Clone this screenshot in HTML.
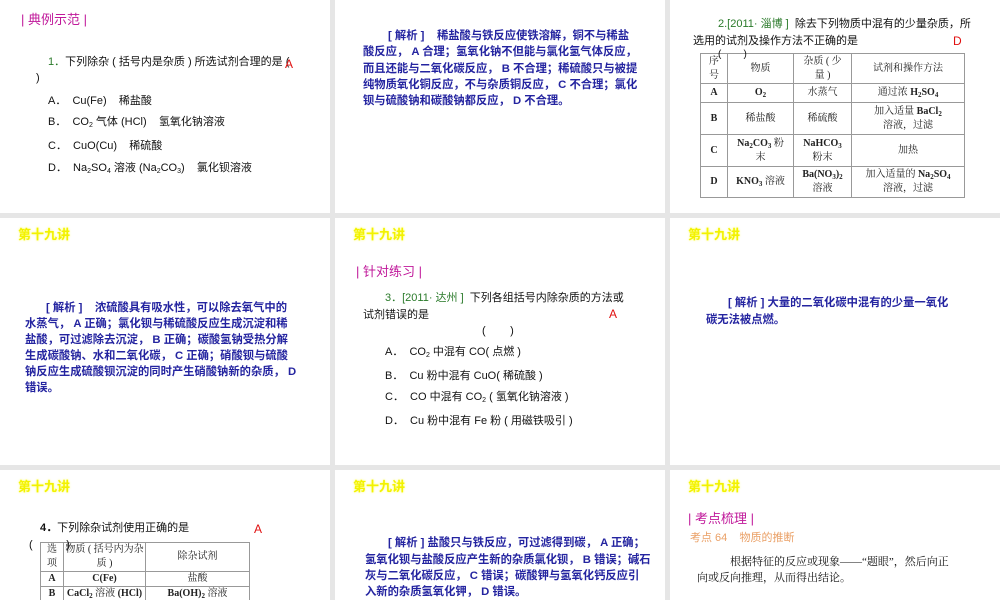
<!DOCTYPE html>
<html style="height:600px;overflow:hidden"><head><meta charset="utf-8"><style>
body{margin:0;width:1000px;height:600px;background:#e6e6e6;position:relative;overflow:hidden;font-family:"Liberation Sans","Noto Sans CJK SC",sans-serif;font-size:11px;color:#111}
.s{position:absolute;background:#fff}
.t{position:absolute;white-space:nowrap;line-height:16px}
.y{color:#f2f200;font-weight:bold;font-size:13px;text-shadow:0 0 2px #ffff66}
.m{color:#c0189a;font-size:13px}
.g{color:#2a7a2a}
.r{color:#e01010;font-size:12px}
.b{color:#2424a0;font-weight:bold;font-size:11.3px}
.o{color:#eaa066}
table{position:absolute;border-collapse:collapse;font-family:"Liberation Serif","Noto Serif CJK SC",serif;font-size:10px;color:#222}
td{border:1px solid #999;text-align:center;padding:0;line-height:14px}
sub{font-size:7px;vertical-align:-2px;line-height:0}
.clip{position:absolute;left:0;top:470px;width:330px;height:130px;overflow:hidden}
</style></head><body>
<div class="s" style="left:0;top:0;width:330px;height:213px"></div>
<div class="s" style="left:335px;top:0;width:330px;height:213px"></div>
<div class="s" style="left:670px;top:0;width:330px;height:213px"></div>
<div class="s" style="left:0;top:218px;width:330px;height:247px"></div>
<div class="s" style="left:335px;top:218px;width:330px;height:247px"></div>
<div class="s" style="left:670px;top:218px;width:330px;height:247px"></div>
<div class="s" style="left:0;top:470px;width:330px;height:130px"></div>
<div class="s" style="left:335px;top:470px;width:330px;height:130px"></div>
<div class="s" style="left:670px;top:470px;width:330px;height:130px"></div>

<!-- slide 1 -->
<div class="t m" style="left:21px;top:12px">| 典例示范 |</div>
<div class="t" style="left:48px;top:54px"><span class="g">1．</span>下列除杂 ( 括号内是杂质 ) 所选试剂合理的是 (</div>
<div class="t r" style="left:285px;top:56px">A</div>
<div class="t" style="left:36px;top:70px">)</div>
<div class="t" style="left:48px;top:93px">A．&nbsp; Cu(Fe)&nbsp;&nbsp;&nbsp; 稀盐酸</div>
<div class="t" style="left:48px;top:114px">B．&nbsp; CO<sub>2</sub> 气体 (HCl)&nbsp;&nbsp;&nbsp; 氢氧化钠溶液</div>
<div class="t" style="left:48px;top:138px">C．&nbsp; CuO(Cu)&nbsp;&nbsp;&nbsp; 稀硫酸</div>
<div class="t" style="left:48px;top:160px">D．&nbsp; Na<sub>2</sub>SO<sub>4</sub> 溶液 (Na<sub>2</sub>CO<sub>3</sub>)&nbsp;&nbsp;&nbsp; 氯化钡溶液</div>

<!-- slide 2 -->
<div class="t b" style="left:388px;top:28px">[ 解析 ]&nbsp;&nbsp;&nbsp; 稀盐酸与铁反应使铁溶解，铜不与稀盐</div>
<div class="t b" style="left:363px;top:44px">酸反应， A 合理；氢氧化钠不但能与氯化氢气体反应，</div>
<div class="t b" style="left:363px;top:61px">而且还能与二氧化碳反应， B 不合理；稀硫酸只与被提</div>
<div class="t b" style="left:363px;top:77px">纯物质氧化铜反应，不与杂质铜反应， C 不合理；氯化</div>
<div class="t b" style="left:363px;top:93px">钡与硫酸钠和碳酸钠都反应， D 不合理。</div>

<!-- slide 3 -->
<div class="t" style="left:718px;top:16px"><span class="g">2.[2011· 淄博 ]</span>&nbsp; 除去下列物质中混有的少量杂质，所</div>
<div class="t" style="left:693px;top:33px">选用的试剂及操作方法不正确的是</div>
<div class="t r" style="left:953px;top:33px">D</div>
<table style="left:700px;top:53px;width:265px">
<tr style="height:30px"><td style="width:26px">序<br>号</td><td style="width:65px">物质</td><td style="width:57px">杂质 ( 少<br>量 )</td><td>试剂和操作方法</td></tr>
<tr style="height:19px"><td><b>A</b></td><td><b>O<sub>2</sub></b></td><td>水蒸气</td><td>通过浓 <b>H<sub>2</sub>SO<sub>4</sub></b></td></tr>
<tr style="height:32px"><td><b>B</b></td><td>稀盐酸</td><td>稀硫酸</td><td>加入适量 <b>BaCl<sub>2</sub></b><br>溶液，过滤</td></tr>
<tr style="height:32px"><td><b>C</b></td><td><b>Na<sub>2</sub>CO<sub>3</sub></b> 粉<br>末</td><td><b>NaHCO<sub>3</sub></b><br>粉末</td><td>加热</td></tr>
<tr style="height:31px"><td><b>D</b></td><td><b>KNO<sub>3</sub></b> 溶液</td><td><b>Ba(NO<sub>3</sub>)<sub>2</sub></b><br>溶液</td><td>加入适量的 <b>Na<sub>2</sub>SO<sub>4</sub></b><br>溶液，过滤</td></tr>
</table>
<div class="t" style="left:718px;top:47px;font-size:10px">(&nbsp;&nbsp;&nbsp;&nbsp;&nbsp;&nbsp;&nbsp; )</div>

<!-- slide 4 -->
<div class="t y" style="left:18px;top:227px">第十九讲</div>
<div class="t b" style="left:46px;top:300px">[ 解析 ]&nbsp;&nbsp;&nbsp; 浓硫酸具有吸水性，可以除去氧气中的</div>
<div class="t b" style="left:25px;top:316px">水蒸气， A 正确；氯化钡与稀硫酸反应生成沉淀和稀</div>
<div class="t b" style="left:25px;top:332px">盐酸，可过滤除去沉淀， B 正确；碳酸氢钠受热分解</div>
<div class="t b" style="left:25px;top:348px">生成碳酸钠、水和二氧化碳， C 正确；硝酸钡与硫酸</div>
<div class="t b" style="left:25px;top:364px">钠反应生成硫酸钡沉淀的同时产生硝酸钠新的杂质， D</div>
<div class="t b" style="left:25px;top:380px">错误。</div>

<!-- slide 5 -->
<div class="t y" style="left:353px;top:227px">第十九讲</div>
<div class="t m" style="left:356px;top:264px">| 针对练习 |</div>
<div class="t" style="left:385px;top:290px"><span class="g">3．[2011· 达州 ]</span>&nbsp; 下列各组括号内除杂质的方法或</div>
<div class="t" style="left:363px;top:307px">试剂错误的是</div>
<div class="t r" style="left:609px;top:306px">A</div>
<div class="t" style="left:482px;top:323px">(&nbsp;&nbsp;&nbsp;&nbsp;&nbsp;&nbsp;&nbsp; )</div>
<div class="t" style="left:385px;top:344px">A．&nbsp; CO<sub>2</sub> 中混有 CO( 点燃 )</div>
<div class="t" style="left:385px;top:368px">B．&nbsp; Cu 粉中混有 CuO( 稀硫酸 )</div>
<div class="t" style="left:385px;top:389px">C．&nbsp; CO 中混有 CO<sub>2</sub> ( 氢氧化钠溶液 )</div>
<div class="t" style="left:385px;top:413px">D．&nbsp; Cu 粉中混有 Fe 粉 ( 用磁铁吸引 )</div>

<!-- slide 6 -->
<div class="t y" style="left:688px;top:227px">第十九讲</div>
<div class="t b" style="left:728px;top:295px">[ 解析 ] 大量的二氧化碳中混有的少量一氧化</div>
<div class="t b" style="left:706px;top:312px">碳无法被点燃。</div>

<!-- slide 7 -->
<div class="clip">
<div class="t y" style="left:18px;top:9px">第十九讲</div>
<div class="t" style="left:40px;top:50px"><b>4．</b>下列除杂试剂使用正确的是</div>
<div class="t r" style="left:254px;top:51px">A</div>
<table style="left:40px;top:72px;width:210px">
<tr style="height:25px"><td style="width:22px">选<br>项</td><td style="width:81px">物质 ( 括号内为杂<br>质 )</td><td>除杂试剂</td></tr>
<tr style="height:14px"><td><b>A</b></td><td><b>C(Fe)</b></td><td>盐酸</td></tr>
<tr style="height:14px"><td><b>B</b></td><td><b>CaCl<sub>2</sub></b> 溶液 <b>(HCl)</b></td><td><b>Ba(OH)<sub>2</sub></b> 溶液</td></tr>
<tr style="height:14px"><td>&nbsp;</td><td></td><td></td></tr>
</table>
<div class="t" style="left:29px;top:67px">(&nbsp;&nbsp;&nbsp;&nbsp;&nbsp;&nbsp;&nbsp;&nbsp;&nbsp;&nbsp; )</div>
</div>

<!-- slide 8 -->
<div class="t y" style="left:353px;top:479px">第十九讲</div>
<div class="t b" style="left:388px;top:535px">[ 解析 ] 盐酸只与铁反应，可过滤得到碳， A 正确；</div>
<div class="t b" style="left:365px;top:552px">氢氧化钡与盐酸反应产生新的杂质氯化钡， B 错误；碱石</div>
<div class="t b" style="left:365px;top:568px">灰与二氧化碳反应， C 错误；碳酸钾与氢氧化钙反应引</div>
<div class="t b" style="left:365px;top:584px">入新的杂质氢氧化钾， D 错误。</div>

<!-- slide 9 -->
<div class="t y" style="left:688px;top:479px">第十九讲</div>
<div class="t m" style="left:688px;top:511px">| 考点梳理 |</div>
<div class="t o" style="left:690px;top:530px">考点 64&nbsp;&nbsp;&nbsp; 物质的推断</div>
<div class="t" style="left:730px;top:554px;font-family:'Liberation Serif','Noto Serif CJK SC',serif">根据特征的反应或现象——“题眼”，然后向正</div>
<div class="t" style="left:697px;top:570px;font-family:'Liberation Serif','Noto Serif CJK SC',serif">向或反向推理，从而得出结论。</div>
</body></html>
